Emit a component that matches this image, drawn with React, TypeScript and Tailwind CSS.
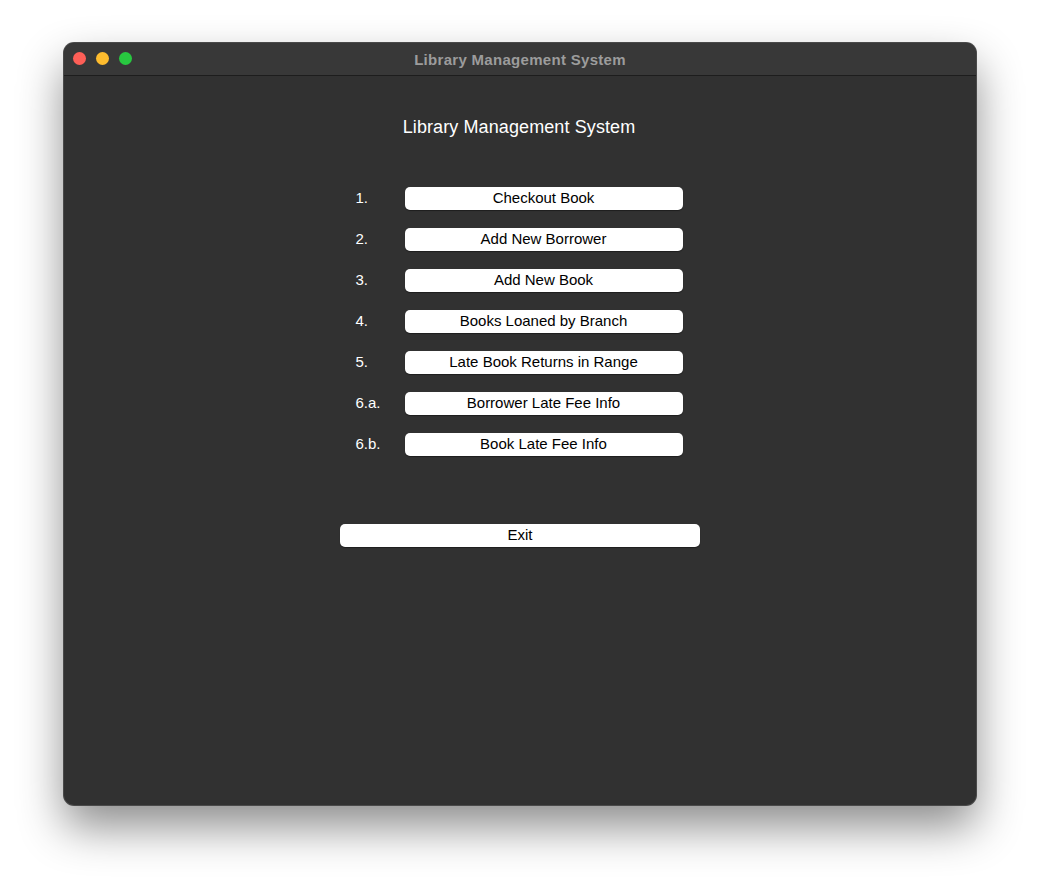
import React from "react";

const items: [string, string][] = [
  ["1.", "Checkout Book"],
  ["2.", "Add New Borrower"],
  ["3.", "Add New Book"],
  ["4.", "Books Loaned by Branch"],
  ["5.", "Late Book Returns in Range"],
  ["6.a.", "Borrower Late Fee Info"],
  ["6.b.", "Book Late Fee Info"],
];

export default function App() {
  return (
    <div
      className="w-[1040px] h-[890px] bg-white pt-[43px] pl-[64px]"
      style={{ fontFamily: '"Liberation Sans", Arial, sans-serif' }}
    >
      <div className="w-[912px] h-[762px] rounded-[10px] bg-[#313131] ring-1 ring-[#4a4a4a] shadow-[0_22px_45px_rgba(0,0,0,0.45)] overflow-hidden flex flex-col">
        <div className="relative h-[33px] bg-[#383838] border-b border-[#1d1d1d] flex items-center justify-center shrink-0">
          <div className="absolute left-[9px] top-[9px] flex gap-[10px]">
            <div className="w-[13px] h-[13px] rounded-full bg-[#fe5f57]" />
            <div className="w-[13px] h-[13px] rounded-full bg-[#febc2e]" />
            <div className="w-[13px] h-[13px] rounded-full bg-[#28c840]" />
          </div>
          <span className="text-[15px] font-bold tracking-[0.3px] text-[#9c9c9c] leading-none">
            Library Management System
          </span>
        </div>
        <div className="flex flex-col items-center">
          <div className="mt-[40px] mr-[2px] text-[18px] leading-[22px] text-white tracking-[0.1px]">
            Library Management System
          </div>
          <div className="mt-[49px] mr-[2px] flex flex-col gap-[18px]">
            {items.map(([n, label]) => (
              <div key={n} className="flex items-center h-[23px]">
                <span className="w-[49px] text-[15px] text-white">{n}</span>
                <button className="w-[278px] h-[23px] rounded-[5px] bg-white text-[15px] text-black shadow-[0_1px_1px_rgba(0,0,0,0.4)]">
                  {label}
                </button>
              </div>
            ))}
          </div>
          <button className="mt-[68px] w-[360px] h-[23px] rounded-[5px] bg-white text-[15px] text-black shadow-[0_1px_1px_rgba(0,0,0,0.4)]">
            Exit
          </button>
        </div>
      </div>
    </div>
  );
}
